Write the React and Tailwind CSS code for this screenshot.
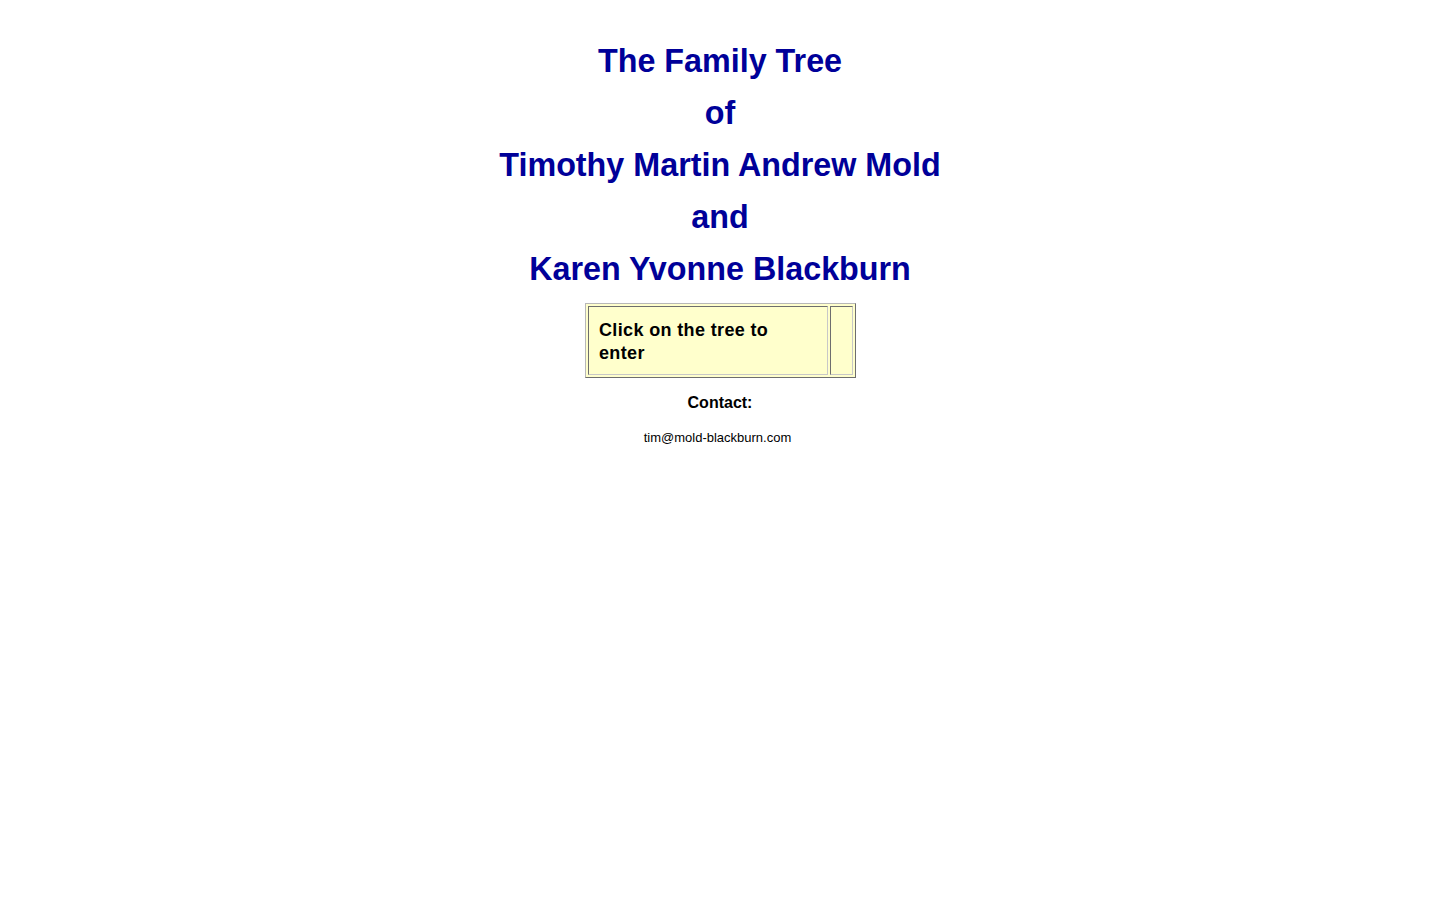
export default function App() {
  const titleLines = [
    'The Family Tree',
    'of',
    'Timothy Martin Andrew Mold',
    'and',
    'Karen Yvonne Blackburn',
  ];

  return (
    <div className="min-h-screen bg-white pt-[35px] flex flex-col items-center" style={{ fontFamily: '"Liberation Sans", Arial, sans-serif' }}>
      {titleLines.map((line) => (
        <h1 key={line} className="text-[32.3px] leading-[52px] font-bold text-[#000099] text-center">
          {line}
        </h1>
      ))}

      {/* entry box: old-style bordered table */}
      <div className="mt-[8px] ml-[1px] flex gap-[2px] p-[2px] bg-[#ffffcc] border border-t-[#b8b8b8] border-l-[#b8b8b8] border-r-[#6e6e6e] border-b-[#6e6e6e]">
        <div className="w-[240px] h-[69px] border border-t-[#6e6e6e] border-l-[#6e6e6e] border-r-[#c8c8c8] border-b-[#c8c8c8] bg-[#ffffcc] pl-[10px] pt-[12px] pr-[30px]">
          <p className="text-[18px] tracking-[0.02em] leading-[23px] font-bold text-black">Click on the tree to enter</p>
        </div>
        <div className="w-[23px] h-[69px] border border-t-[#6e6e6e] border-l-[#6e6e6e] border-r-[#c8c8c8] border-b-[#c8c8c8] bg-[#ffffcc]" />
      </div>

      <p className="mt-[15px] text-[16px] leading-[20px] font-bold text-black">Contact:</p>
      <p className="mt-[17px] text-[13px] leading-[16px] text-black -ml-[5px]">tim@mold-blackburn.com</p>
    </div>
  );
}
